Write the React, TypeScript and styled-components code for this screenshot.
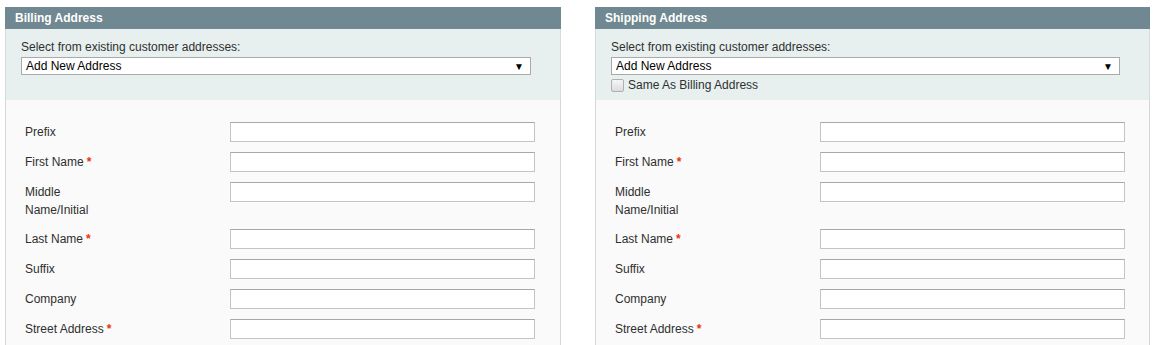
import React from 'react'
import styled, { createGlobalStyle } from 'styled-components'

const Global = createGlobalStyle`
  body {
    margin: 0;
    background: #ffffff;
    font-family: "Liberation Sans", Arial, sans-serif;
    font-size: 12px;
    color: #2f2f2f;
  }
`

const Page = styled.div`
  display: grid;
  grid-template-columns: 556px 555px;
  column-gap: 34px;
  padding: 7px 5px 0 5px;
  align-items: start;
`

const Panel = styled.div`
  display: flex;
  flex-direction: column;
`

const Head = styled.div`
  background: #6f8892;
  color: #ffffff;
  font-weight: bold;
  font-size: 12px;
  height: 22px;
  line-height: 22px;
  padding-left: 10px;
`

const Chooser = styled.div`
  background: #e7efef;
  border-left: 1px solid #d6dcdc;
  border-right: 1px solid #d6dcdc;
  height: 71px;
  box-sizing: border-box;
  padding: 11px 29px 0 15px;
  display: flex;
  flex-direction: column;
`

const ChooserLabel = styled.div`
  line-height: 14px;
  margin-bottom: 3px;
`

const Select = styled.div`
  display: flex;
  align-items: center;
  justify-content: space-between;
  height: 18px;
  box-sizing: border-box;
  background: #ffffff;
  border: 1px solid #aaaaaa;
  padding: 0 6px 0 4px;
  color: #000;
`

const Arrow = styled.span`
  font-size: 10px;
  color: #000;
`

const Check = styled.label`
  display: flex;
  align-items: center;
  gap: 4px;
  margin-top: 3px;
  line-height: 14px;
`

const Box = styled.span`
  width: 11px;
  height: 11px;
  border: 1px solid #b0b0b0;
  border-radius: 2px;
  background: linear-gradient(#f6f6f6, #dcdcdc);
`

const Fields = styled.div`
  background: #fafafa;
  border-left: 1px solid #d6d6d6;
  border-right: 1px solid #d6d6d6;
  padding: 22px 25px 0 19px;
  height: 223px;
`

const Row = styled.div`
  display: grid;
  grid-template-columns: 205px 305px;
  padding-bottom: 10px;
`

const Label = styled.div`
  line-height: 18px;
  padding-top: 1px;
  max-width: 92px;
`

const Req = styled.span`
  color: #eb340a;
  font-weight: bold;
  margin-left: 3px;
`

const Input = styled.div`
  height: 20px;
  box-sizing: border-box;
  background: #ffffff;
  border: 1px solid #c4c4c4;
  border-top-color: #a8a8a8;
`

type Field = { name: string; req?: boolean }

const fields: Field[] = [
  { name: 'Prefix' },
  { name: 'First Name', req: true },
  { name: 'Middle Name/Initial' },
  { name: 'Last Name', req: true },
  { name: 'Suffix' },
  { name: 'Company' },
  { name: 'Street Address', req: true },
]

const AddressPanel = ({ title, same }: { title: string; same?: boolean }) => (
  <Panel>
    <Head>{title}</Head>
    <Chooser>
      <ChooserLabel>Select from existing customer addresses:</ChooserLabel>
      <Select>
        <span>Add New Address</span>
        <Arrow>▼</Arrow>
      </Select>
      {same && (
        <Check>
          <Box />
          <span>Same As Billing Address</span>
        </Check>
      )}
    </Chooser>
    <Fields>
      {fields.map((f) => (
        <Row key={f.name}>
          <Label>
            {f.name}
            {f.req && <Req>*</Req>}
          </Label>
          <Input />
        </Row>
      ))}
    </Fields>
  </Panel>
)

const App = () => (
  <>
    <Global />
    <Page>
      <AddressPanel title="Billing Address" />
      <AddressPanel title="Shipping Address" same />
    </Page>
  </>
)

export default App
